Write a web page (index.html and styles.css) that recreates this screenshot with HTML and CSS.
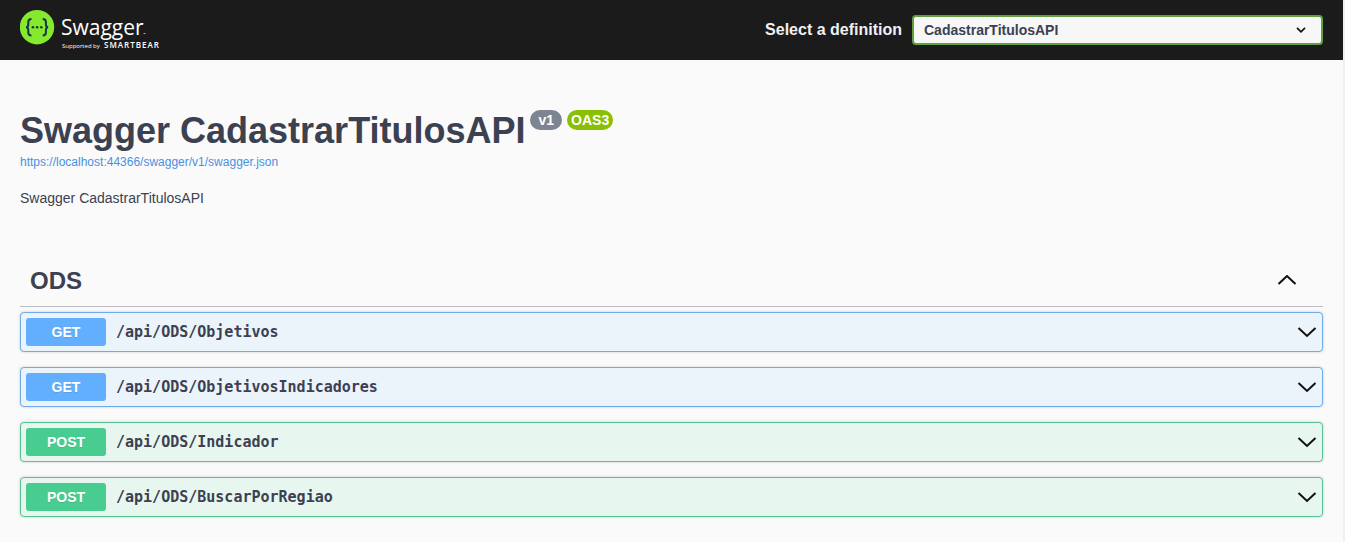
FILE: index.html
```html
<!DOCTYPE html>
<html lang="en">
<head>
<meta charset="utf-8">
<title>Swagger UI</title>
<link rel="stylesheet" href="styles.css">
</head>
<body>
<header class="topbar">
  <a class="logo" href="#" aria-label="Swagger, supported by SmartBear">
    <svg width="142" height="40" viewBox="0 0 142 40">
      <circle cx="17" cy="17.2" r="17.2" fill="#85ea2d"/>
      <g fill="none" stroke="#173647" stroke-width="2">
        <path d="M11.500 9c-2.600 0-3.200 1-3.200 3v2.300c0 1.900-.6 2.900-2.300 2.900 1.700 0 2.300 1 2.300 2.900v2.300c0 2 .6 3 3.200 3"/>
        <path d="M22.700 9c2.600 0 3.200 1 3.200 3v2.300c0 1.900.6 2.900 2.300 2.900-1.700 0-2.300 1-2.300 2.900v2.300c0 2-.6 3-3.200 3"/>
      </g>
      <g fill="#173647"><circle cx="12.900" cy="17.200" r="1.300"/><circle cx="17.100" cy="17.200" r="1.300"/><circle cx="21.300" cy="17.200" r="1.300"/></g>
      <text class="logo-name" x="41" y="25">Swagger</text>
      <path d="M123.500 23.500h2" stroke="#aaa"/>
      <text class="logo-by" x="42" y="38">Supported by</text>
      <text class="logo-brand" x="84" y="38">SMARTBEAR</text>
    </svg>
  </a>
  <div class="definition">
    <label for="definition">Select a definition</label>
    <div class="select-box">
      <select id="definition"><option>CadastrarTitulosAPI</option></select>
      <svg class="select-arrow" width="10" height="6" viewBox="0 0 10 6"><path d="M1 .8l4 4 4-4" fill="none" stroke="#111" stroke-width="1.700"/></svg>
    </div>
  </div>
</header>
<main class="content">
  <section class="info">
    <div class="title-row">
      <h1>Swagger CadastrarTitulosAPI</h1>
      <span class="badge version">v1</span>
      <span class="badge oas">OAS3</span>
    </div>
    <a class="spec-link" href="#">https://localhost:44366/swagger/v1/swagger.json</a>
    <p class="description">Swagger CadastrarTitulosAPI</p>
  </section>
  <section>
    <div class="tag">
      <h2>ODS</h2>
      <button class="toggle" aria-label="Collapse ODS"><svg width="20" height="12" viewBox="0 0 20 12"><path d="M1.500 9L10 1l8.500 8"/></svg></button>
    </div>
    <div class="operations">
      <div class="operation get">
        <span class="method">GET</span><span class="path">/api/ODS/Objetivos</span>
        <button class="toggle" aria-label="Expand Objetivos"><svg width="20" height="12" viewBox="0 0 20 12"><path d="M1.500 2L10 10l8.500-8"/></svg></button>
      </div>
      <div class="operation get">
        <span class="method">GET</span><span class="path">/api/ODS/ObjetivosIndicadores</span>
        <button class="toggle" aria-label="Expand ObjetivosIndicadores"><svg width="20" height="12" viewBox="0 0 20 12"><path d="M1.500 2L10 10l8.500-8"/></svg></button>
      </div>
      <div class="operation post">
        <span class="method">POST</span><span class="path">/api/ODS/Indicador</span>
        <button class="toggle" aria-label="Expand Indicador"><svg width="20" height="12" viewBox="0 0 20 12"><path d="M1.500 2L10 10l8.500-8"/></svg></button>
      </div>
      <div class="operation post">
        <span class="method">POST</span><span class="path">/api/ODS/BuscarPorRegiao</span>
        <button class="toggle" aria-label="Expand BuscarPorRegiao"><svg width="20" height="12" viewBox="0 0 20 12"><path d="M1.500 2L10 10l8.500-8"/></svg></button>
      </div>
    </div>
  </section>
</main>
</body>
</html>
```
FILE: styles.css
```css
* { box-sizing: border-box; }
body {
  margin: 0;
  min-height: 100vh;
  border-right: 2px solid #f0f0f0;
  background: #fafafa;
  color: #3b4151;
  font-family: "Liberation Sans", Arial, sans-serif;
}
h1, h2, p { margin: 0; }
svg { display: block; }

.topbar {
  display: flex;
  align-items: center;
  justify-content: space-between;
  height: 60px;
  padding: 0 20px;
  background: #1b1b1b;
}
.logo-name, .logo-by, .logo-brand { fill: #fff; font-family: "Open Sans", sans-serif; }
.logo-name { font-size: 21px; font-weight: 400; }
.logo-by { font-size: 6px; }
.logo-brand { font-size: 8px; font-weight: 600; letter-spacing: 1px; }
.definition {
  display: flex;
  align-items: center;
  justify-content: flex-end;
  gap: 10px;
  color: #f0f0f0;
  font-size: 16px;
  font-weight: 700;
}
.definition label { white-space: nowrap; }
.select-box { position: relative; width: 411px; }
.select-box select {
  display: block;
  width: 100%;
  height: 30px;
  padding: 0 40px 0 10px;
  border: 2px solid #62a03f;
  border-radius: 4px;
  background: #f7f7f7;
  color: #3b4151;
  font: 700 14px "Liberation Sans", Arial, sans-serif;
  appearance: none;
}
.select-arrow { position: absolute; top: 12px; right: 17px; pointer-events: none; }

.content { padding: 50px 20px 24px; }
.info { margin-bottom: 48px; }
.title-row { display: flex; align-items: flex-start; gap: 5px; }
h1 { font-size: 36px; line-height: 42px; }
.badge { padding: 0 8px; border-radius: 10px; color: #fff; font-size: 14px; font-weight: 700; line-height: 20px; }
.version { background: #7d8492; }
.oas { padding: 0 4px; background: #89bf04; }
.spec-link { display: block; color: #4990e2; font-size: 12px; line-height: 20px; text-decoration: none; }
.description { margin-top: 16px; font-size: 14px; line-height: 20px; }

.tag {
  display: flex;
  align-items: center;
  justify-content: space-between;
  padding: 10px 26px 10px 10px;
  border-bottom: 1px solid #bcbec3;
}
h2 { font-size: 24px; line-height: 30px; }
.toggle { padding: 0; border: 0; background: none; cursor: pointer; }
.toggle path { fill: none; stroke: #111; stroke-width: 2px; }
.operations { display: grid; gap: 15px; margin-top: 5px; }
.operation {
  display: flex;
  align-items: center;
  gap: 10px;
  padding: 5px;
  border: 1px solid;
  border-radius: 4px;
  box-shadow: 0 0 3px rgba(0, 0, 0, .19);
}
.operation .toggle { margin-left: auto; }
.get { border-color: #6fabea; background: #ebf3fb; }
.post { border-color: #55c394; background: #e8f6f0; }
.method {
  width: 80px;
  border-radius: 3px;
  color: #fff;
  font-size: 14px;
  font-weight: 700;
  line-height: 28px;
  text-align: center;
  text-shadow: 0 1px 0 rgba(0, 0, 0, .1);
}
.get .method { background: #61affe; }
.post .method { background: #49cc90; }
.path { font: 700 15px "DejaVu Sans Mono", monospace; }
```
